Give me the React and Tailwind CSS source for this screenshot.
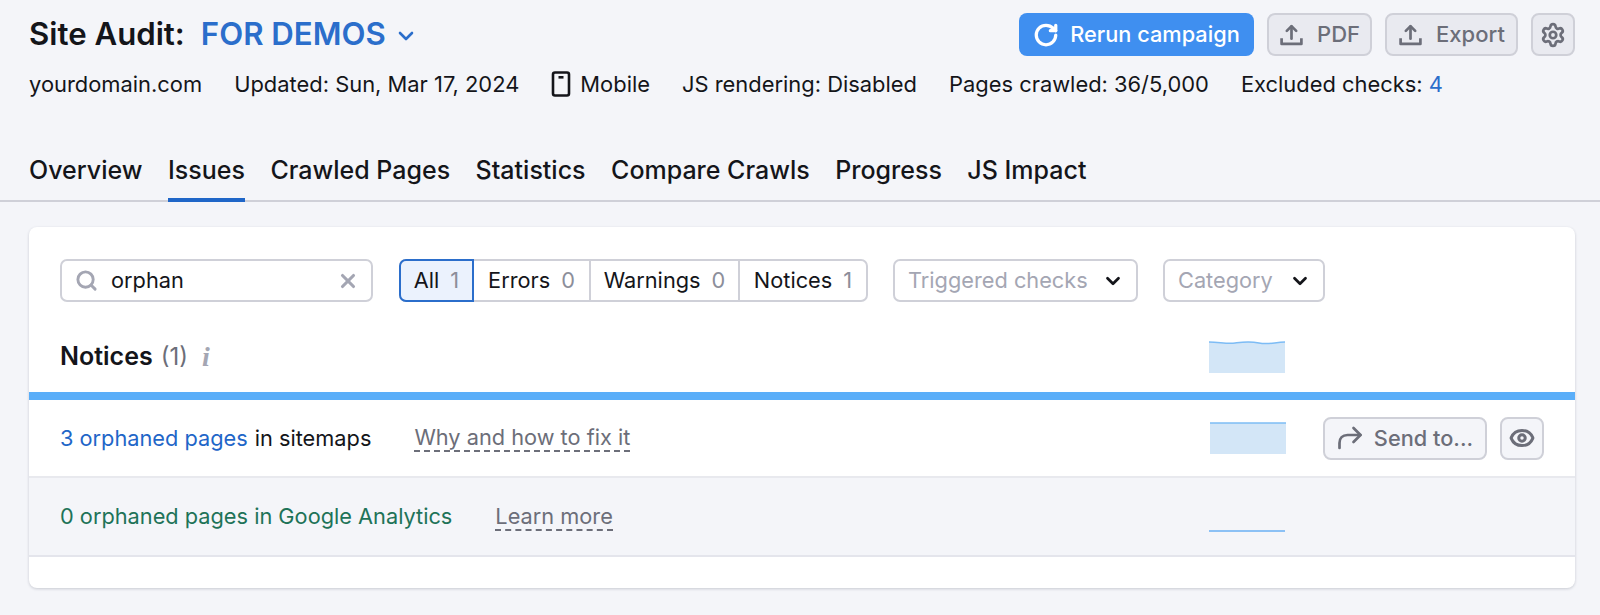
import { ChevronDown, RotateCw, Settings, Search, X, Eye } from 'lucide-react';

const TABS = ['Overview', 'Issues', 'Crawled Pages', 'Statistics', 'Compare Crawls', 'Progress', 'JS Impact'];

const FILTERS = [
  { label: 'All', count: 1, width: 'w-[75px]', active: true },
  { label: 'Errors', count: 0, width: 'w-[115px]' },
  { label: 'Warnings', count: 0, width: 'w-[149px]' },
  { label: 'Notices', count: 1, width: 'flex-1' },
];

function UploadIcon() {
  return (
    <svg width="25" height="25" viewBox="0 0 24 24" fill="none" stroke="currentColor" strokeWidth="2.6" strokeLinecap="round" strokeLinejoin="round">
      <path d="M12 16V4.5" />
      <path d="M7.5 8.5 12 4 16.5 8.5" />
      <path d="M2.5 15.5v5.5h19v-5.5" strokeLinecap="butt" />
    </svg>
  );
}

function PhoneIcon() {
  return (
    <svg width="20" height="26" viewBox="0 0 20 26" fill="none" className="text-[#14151a]">
      <rect x="2" y="1.5" width="16" height="23" rx="2" stroke="currentColor" strokeWidth="2.6" />
      <rect x="7.5" y="5" width="5" height="2.6" fill="currentColor" />
    </svg>
  );
}

function SendIcon() {
  return (
    <svg width="26" height="24" viewBox="0 0 26 24" fill="none" stroke="currentColor" strokeWidth="2.7" strokeLinecap="round" strokeLinejoin="round">
      <path d="M2.5 22v-5c0-5 3-8 8-8h13" />
      <path d="M16.5 2 23.5 9l-7 7" />
    </svg>
  );
}

function Spark({ wave, flat }) {
  if (flat) {
    return <div className="w-[76px] h-[2px] bg-[#8cc1f5]" />;
  }
  const line = wave ? 'M0 1 C10 1 18 3 26 2 S40 0 50 2 S66 1 76 1' : 'M0 1 H76';
  return (
    <svg width="76" height="32" viewBox="0 0 76 32" className="block">
      <path d={`${line} V32 H0 Z`} fill="#d3e6f7" />
      <path d={line} stroke="#7dbcf5" strokeWidth="1.5" fill="none" />
    </svg>
  );
}

function GrayButton({ children, className = '' }) {
  return (
    <button className={`h-[43px] flex items-center justify-center rounded-[8px] border-2 border-[#cfd0d8] bg-[#e9eaf0] text-[#6c6e79] text-[22px] font-medium ${className}`}>
      {children}
    </button>
  );
}

function Dropdown({ label, className }) {
  return (
    <div className={`h-[43px] flex items-center justify-between pl-[13px] pr-[12px] border-2 border-[#cfd0d8] rounded-[7px] text-[#a4a6b3] ${className}`}>
      <span>{label}</span>
      <ChevronDown size={22} strokeWidth={3} className="text-[#14151a]" />
    </div>
  );
}

export default function App() {
  return (
    <div className="h-[615px] overflow-hidden bg-[#f4f5f9] text-[#14151a] text-[21.75px] font-['Inter',sans-serif]">
      <header className="pt-[13px]">
        <div className="flex items-center justify-between pl-[29px] pr-[25px]">
          <div className="flex items-center h-[43px] text-[31.2px] font-semibold">
            <span>Site Audit:</span>
            <span className="ml-[16px] text-[#2b6ecb]">FOR DEMOS</span>
            <ChevronDown size={24} strokeWidth={2.6} className="ml-[8px] mt-[2px] text-[#2b6ecb]" />
          </div>
          <div className="flex items-center gap-[13px]">
            <button className="h-[43px] w-[235px] flex items-center justify-center gap-[11px] rounded-[8px] bg-[#3f8ff0] text-white text-[21.75px] font-medium">
              <RotateCw size={26} strokeWidth={3} />
              Rerun campaign
            </button>
            <GrayButton className="w-[105px] gap-[13px]"><UploadIcon />PDF</GrayButton>
            <GrayButton className="w-[133px] gap-[13px]"><UploadIcon />Export</GrayButton>
            <GrayButton className="w-[44px]"><Settings size={26} strokeWidth={2.5} /></GrayButton>
          </div>
        </div>

        <div className="flex items-center gap-[32px] pl-[29px] h-[30px] mt-[13px] text-[21.9px]">
          <span>yourdomain.com</span>
          <span>Updated: Sun, Mar 17, 2024</span>
          <span className="flex items-center gap-[9px]"><PhoneIcon />Mobile</span>
          <span>JS rendering: Disabled</span>
          <span>Pages crawled: 36/5,000</span>
          <span>Excluded checks: <span className="text-[#2b6ecb]">4</span></span>
        </div>

        <nav className="flex gap-[25.5px] pl-[29px] mt-[40px] h-[63px] border-b-2 border-[#cfd0d8] text-[25px] font-medium">
          {TABS.map(tab => (
            <a
              key={tab}
              className={`h-[63px] pt-[13px] leading-[36px] border-b-[4px] ${tab === 'Issues' ? 'border-[#1f66c8]' : 'border-transparent'}`}
            >
              {tab}
            </a>
          ))}
        </nav>
      </header>

      <main className="ml-[29px] mr-[25px] mt-[25px] h-[361px] bg-white rounded-[8px] shadow-[0_1px_3px_rgba(30,35,60,0.2)] overflow-hidden">
        {/* Filters */}
        <div className="flex pt-[32px] pl-[31px]">
          <div className="w-[313px] h-[43px] flex items-center border-2 border-[#cfd0d8] rounded-[7px] pl-[13px] pr-[12px]">
            <Search size={23} strokeWidth={3} className="text-[#a4a6b3]" />
            <span className="ml-[13px] flex-1">orphan</span>
            <X size={22} strokeWidth={3.4} className="text-[#a4a6b3]" />
          </div>
          <div className="ml-[26px] w-[469px] h-[43px] flex border-2 border-[#cfd0d8] rounded-[7px]">
            {FILTERS.map((f, i) => (
              <div
                key={f.label}
                className={`flex items-center justify-center gap-[11px] ${f.width} ${
                  f.active
                    ? '-m-[2px] mr-0 border-2 border-[#2b6ecb] bg-[#ebf2fd] rounded-l-[7px]'
                    : i > 1 ? 'border-l-2 border-[#cfd0d8]' : ''
                }`}
              >
                <span>{f.label}</span>
                <span className="text-[#8c8e9a]">{f.count}</span>
              </div>
            ))}
          </div>
          <Dropdown label="Triggered checks" className="ml-[25px] w-[245px]" />
          <Dropdown label="Category" className="ml-[25px] w-[162px]" />
        </div>

        {/* Notices header */}
        <div className="flex items-center h-[90px] pt-[20px] pl-[31px] pr-[290px]">
          <span className="text-[25px] font-semibold">Notices</span>
          <span className="ml-[8px] text-[24px] text-[#6c6e79]">(1)</span>
          <span className="ml-[14px] text-[28px] font-bold italic font-['Liberation_Serif',serif] text-[#a4a6b3]">i</span>
          <div className="ml-auto"><Spark wave /></div>
        </div>

        <div className="h-[8px] bg-[#5aaef9]" />

        {/* Rows */}
        <div className="flex items-center h-[78px] pl-[31px] pr-[31px] border-b-2 border-[#e8e9ee]">
          <span className="text-[#1f66c8]">3 orphaned pages</span>
          <span className="ml-[7px]">in sitemaps</span>
          <span className="ml-[43px] text-[#6c6e79] border-b-2 border-dashed border-[#6c6e79] leading-[26px]">Why and how to fix it</span>
          <div className="ml-auto"><Spark /></div>
          <button className="ml-[37px] w-[164px] h-[43px] flex items-center justify-center gap-[11px] rounded-[8px] border-2 border-[#cfd0d8] bg-[#f4f5f9] text-[#6c6e79] font-medium text-[21.75px]">
            <SendIcon />
            Send to...
          </button>
          <button className="ml-[13px] w-[44px] h-[43px] flex items-center justify-center rounded-[8px] border-2 border-[#cfd0d8] bg-[#f4f5f9] text-[#6c6e79]">
            <Eye size={26} strokeWidth={2.8} />
          </button>
        </div>

        <div className="flex items-center h-[79px] pl-[31px] pr-[290px] bg-[#f4f5f9] border-b-2 border-[#e4e5ec]">
          <span className="text-[#1e7358]">0 orphaned pages in Google Analytics</span>
          <span className="ml-[43px] text-[#6c6e79] border-b-2 border-dashed border-[#6c6e79] leading-[26px]">Learn more</span>
          <div className="ml-auto mt-[28px]"><Spark flat /></div>
        </div>
      </main>
    </div>
  );
}
